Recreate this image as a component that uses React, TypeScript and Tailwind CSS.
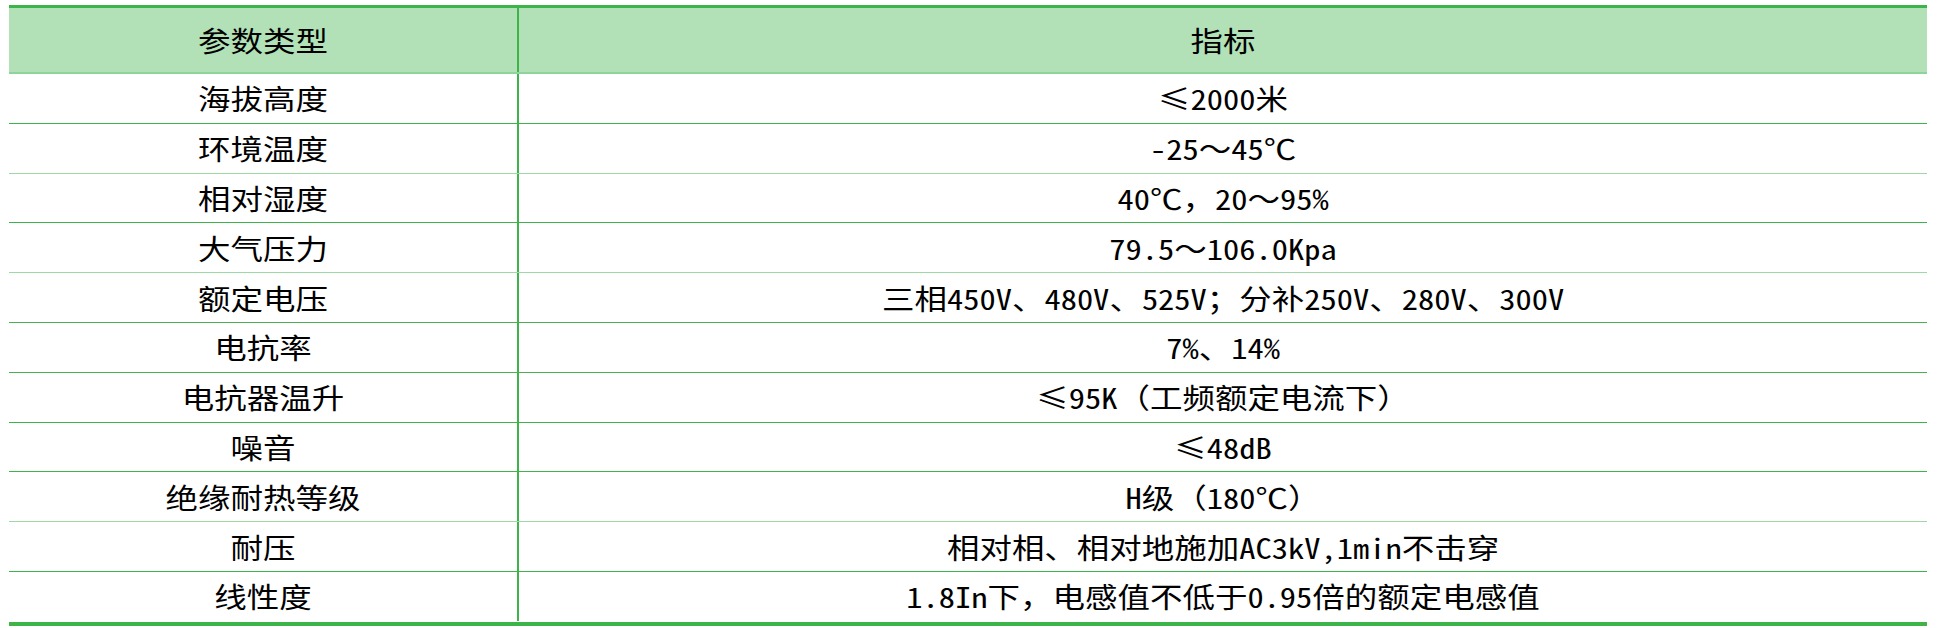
const rows: { name: string; value: string; line: string }[] = [
  { name: '海拔高度', value: '≤2000米', line: 'border-[#3cb44a]' },
  { name: '环境温度', value: '-25～45℃', line: 'border-[#9dd9a5]' },
  { name: '相对湿度', value: '40℃，20～95%', line: 'border-[#3cb44a]' },
  { name: '大气压力', value: '79.5～106.0Kpa', line: 'border-[#9dd9a5]' },
  { name: '额定电压', value: '三相450V、480V、525V；分补250V、280V、300V', line: 'border-[#4caf50]' },
  { name: '电抗率', value: '7%、14%', line: 'border-[#4caf50]' },
  { name: '电抗器温升', value: '≤95K（工频额定电流下）', line: 'border-[#3cb44a]' },
  { name: '噪音', value: '≤48dB', line: 'border-[#3cb44a]' },
  { name: '绝缘耐热等级', value: 'H级（180℃）', line: 'border-[#9dd9a5]' },
  { name: '耐压', value: '相对相、相对地施加AC3kV,1min不击穿', line: 'border-[#3cb44a]' },
  { name: '线性度', value: '1.8In下，电感值不低于0.95倍的额定电感值', line: 'border-transparent' },
]

// half-width ASCII runs, like the monospaced Latin of a Chinese document font
function CellText({ children }: { children: string }) {
  const parts = children.split(/([\x21-\x7e]+)/).filter(Boolean)
  return (
    <span className="inline-block origin-center scale-x-[1.16] whitespace-nowrap text-[28px] leading-none text-black">
      {parts.map((part, i) =>
        /^[\x21-\x7e]+$/.test(part) ? (
          <span key={i} className="[font-feature-settings:'hwid']">{part}</span>
        ) : (
          <span key={i}>{part}</span>
        )
      )}
    </span>
  )
}

export default function App() {
  return (
    <div className="min-h-[628px] w-[1940px] bg-white px-[9px] pt-[5px] font-['Noto_Sans_CJK_SC','Noto_Sans',sans-serif]">
      <div className="w-[1918px] border-t-[3px] border-b-4 border-[#3cb44a]">
        {/* Header */}
        <div className="flex h-[66px] border-b-2 border-[#8fd49a] bg-[#b2e1b8]">
          <div className="flex w-[510px] items-center justify-center border-r-2 border-[#3cb44a]">
            <CellText>参数类型</CellText>
          </div>
          <div className="flex flex-1 items-center justify-center">
            <CellText>指标</CellText>
          </div>
        </div>

        {/* Rows */}
        {rows.map((row) => (
          <div key={row.name} className={`flex h-[49.8px] border-b ${row.line}`}>
            <div className="flex w-[510px] items-center justify-center border-r-2 border-[#3cb44a]">
              <CellText>{row.name}</CellText>
            </div>
            <div className="flex flex-1 items-center justify-center">
              <CellText>{row.value}</CellText>
            </div>
          </div>
        ))}
      </div>
    </div>
  )
}
